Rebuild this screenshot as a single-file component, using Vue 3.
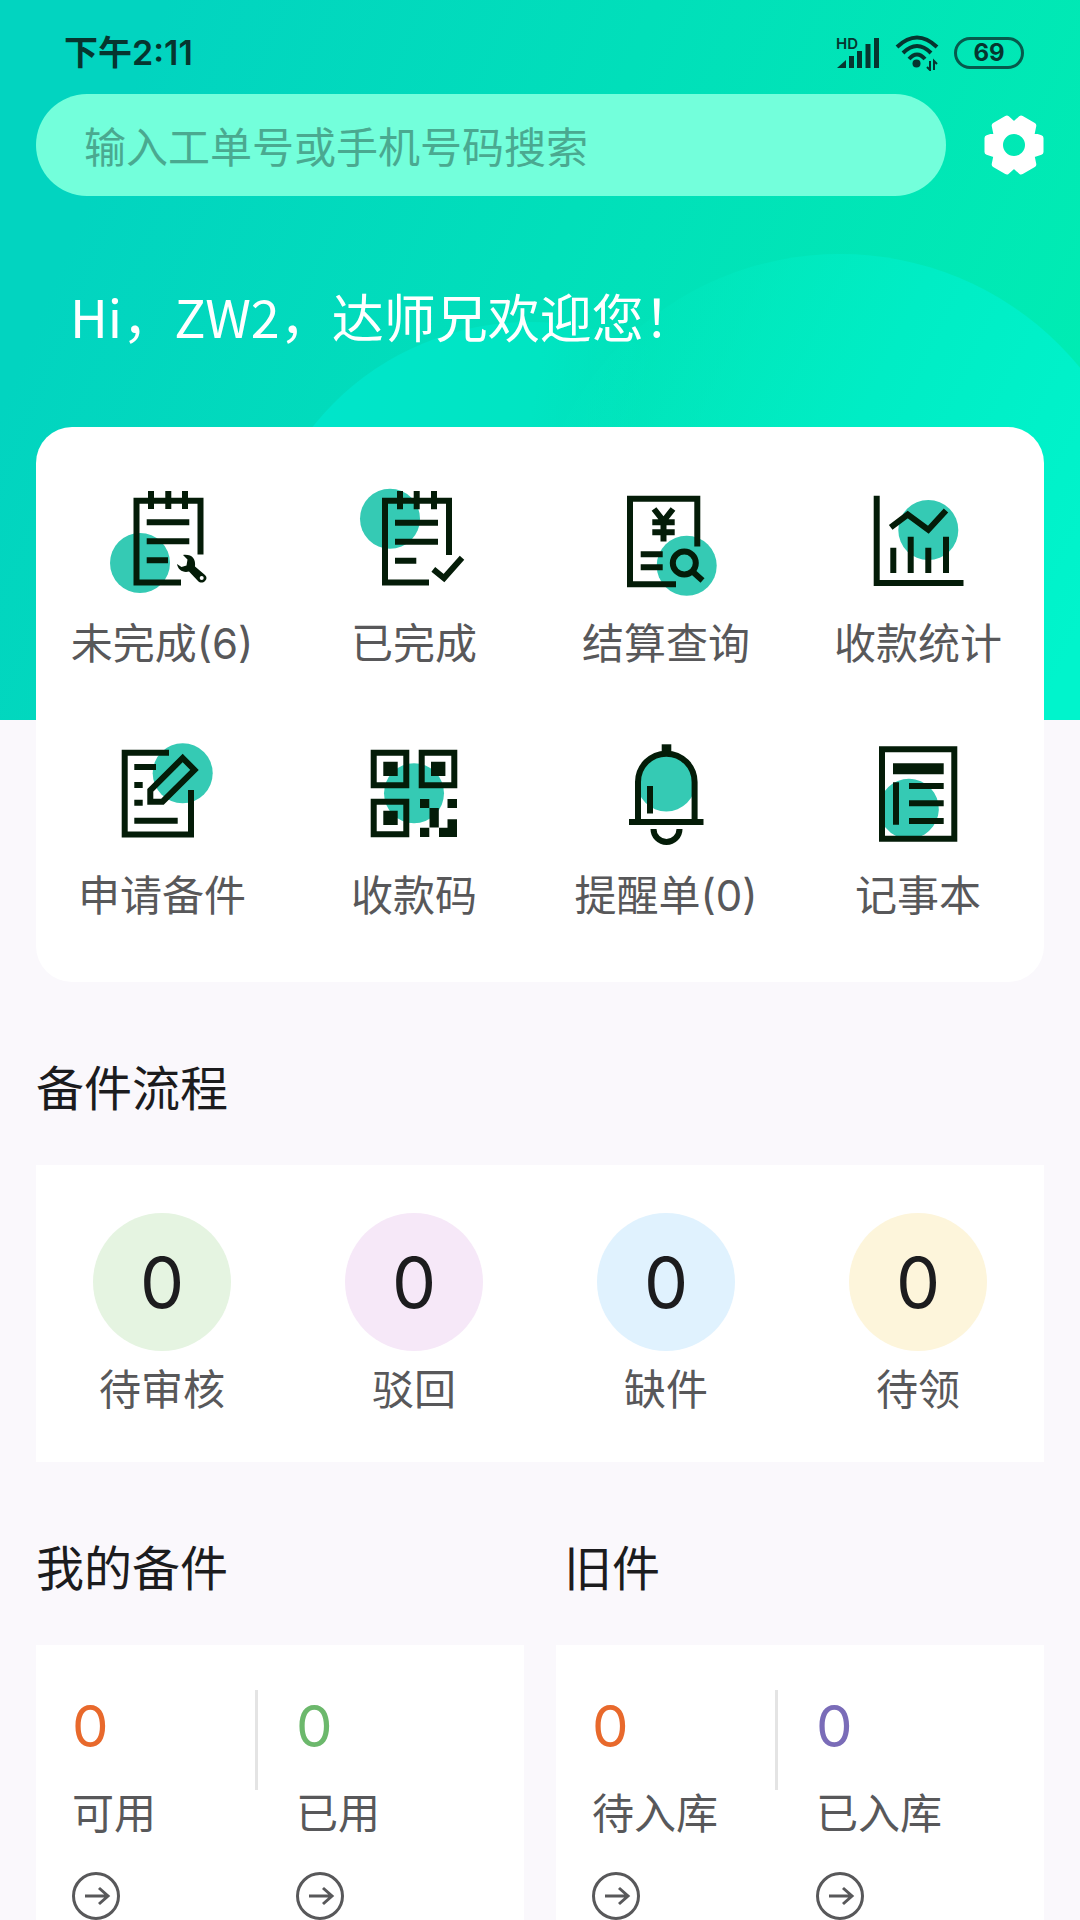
<template>
  <div class="page">
    <!-- 顶部装饰圆 -->
    <div class="decor">
      <span class="bubble bubble-left"></span>
      <span class="bubble bubble-right"></span>
    </div>

    <!-- 状态栏 -->
    <header class="status-bar">
      <span class="status-time">下午2:11</span>
      <div class="status-icons">
        <svg class="signal" viewBox="0 0 44 34" aria-hidden="true">
          <text x="0" y="13" class="hd">HD</text>
          <path d="M1 32 L10 24 V32 Z" />
          <path d="M15.5 32 V20 M23.5 32 V15 M32 32 V8 M40.5 32 V2" class="bars" />
        </svg>
        <svg class="wifi" viewBox="0 0 44 36" aria-hidden="true">
          <path d="M2 12 Q22 -7 42 12" />
          <path d="M8 18 Q22 4 36 18" />
          <path d="M14 24 Q22 15 30 24" />
          <circle cx="21.5" cy="28.5" r="4" />
          <path d="M35 26 V35 L32 32 M39 35 V26 L42 29" class="arrows" />
        </svg>
        <span class="battery">69</span>
      </div>
    </header>

    <!-- 搜索 -->
    <form class="search-row" @submit.prevent>
      <input
        v-model="keyword"
        class="search-input"
        type="text"
        aria-label="输入工单号或手机号码搜索"
        placeholder="输入工单号或手机号码搜索"
      />
      <button type="button" class="setting-btn" aria-label="设置">
        <svg viewBox="-30 -30 60 60" aria-hidden="true">
          <path
            fill-rule="evenodd"
            d="M26.5 -7 V7 L17.4 10 L19.3 19.3 L7.2 26.5 L0 20 L-7.2 26.5 L-19.3 19.3 L-17.4 10 L-26.5 7 V-7 L-17.4 -10 L-19.3 -19.3 L-7.2 -26.5 L0 -20 L7.2 -26.5 L19.3 -19.3 L17.4 -10 Z M14 0 A14 14 0 1 0 -14 0 A14 14 0 1 0 14 0 Z"
          />
        </svg>
      </button>
    </form>

    <h1 class="greeting">Hi，ZW2，达师兄欢迎您！</h1>

    <!-- 功能菜单 -->
    <nav class="menu-card">
      <a v-for="item in menus" :key="item.icon" href="#" class="menu-item" @click.prevent>
        <svg v-if="item.icon === 'todo'" class="icon" viewBox="0 0 120 120">
          <circle class="dot" cx="38" cy="83" r="30" />
          <path d="M79 102.5 H34.5 V20.7 H98.5 V74.5" />
          <path d="M49 11 V29 M66.3 11 V29 M83 11 V29" />
          <path d="M44.7 42.3 H87.3 M44.7 61.3 H87.3 M44.7 80.3 H66" />
          <path
            class="solid"
            d="M75 84 C76 90 81 93 87 91.5 L96 101 C98 103 101 103 103 101 C105 99 105 97 103 95 L93 86.5 C94 79 90 74 81 75 L85.5 79.5 L84.5 85.5 L79.5 87 Z"
          />
          <circle class="hole" cx="99.7" cy="98" r="2" />
        </svg>
        <svg v-else-if="item.icon === 'done'" class="icon" viewBox="0 0 120 120">
          <circle class="dot" cx="36" cy="38.7" r="30" />
          <path d="M75 102.5 H31 V20.7 H95 V75" />
          <path d="M46 11 V29.3 M62.7 11 V29.3 M80 11 V29.3" />
          <path d="M41 42.7 H84 M41 61.7 H84 M41 80.7 H62.3" />
          <path d="M79.3 89.3 L90 98 L108 77.7" />
        </svg>
        <svg v-else-if="item.icon === 'settle'" class="icon" viewBox="0 0 120 120">
          <circle class="dot" cx="80.7" cy="85.7" r="30" />
          <path d="M70 104.3 H24 V18.7 H91.3 V66.5" />
          <path d="M48 29 L57.5 41 L67 29 M57.5 40 V61.5 M46.3 42.3 H68.7 M46.3 52.3 H68.7" />
          <path d="M34.7 74.3 H56.7 M34.7 87.3 H56.7" />
          <circle cx="78.3" cy="83" r="11.5" />
          <path d="M86.5 91.5 L96.5 100.5" />
        </svg>
        <svg v-else-if="item.icon === 'chart'" class="icon" viewBox="0 0 120 120">
          <circle class="dot" cx="70.3" cy="50" r="30" />
          <path d="M18.7 15.7 V103 H105.5" />
          <path d="M32.7 47.3 L49.7 34.5 L70.3 49.7 L88 30.5" />
          <path d="M35.3 67.7 V93 M52.7 56.7 V93 M70.3 67.7 V93 M88 56.7 V93" />
        </svg>
        <svg v-else-if="item.icon === 'apply'" class="icon" viewBox="0 0 120 120">
          <circle class="dot" cx="80.7" cy="41.3" r="30" />
          <path d="M67 20.7 H22.7 V102.5 H89 V58" />
          <path d="M32.3 35 H54 M32.3 53 H40.7 M32.3 70.7 H40.7 M32.3 88.7 H75.7" />
          <path d="M80.7 26 L92.5 38 L60.5 69.7 H48.3 V58.3 Z" />
        </svg>
        <svg v-else-if="item.icon === 'qrcode'" class="icon" viewBox="0 0 120 120">
          <circle class="dot" cx="60" cy="61.3" r="30" />
          <path d="M19.7 20.7 H52.3 V53.3 H19.7 Z M67.7 20.7 H100.3 V53.3 H67.7 Z M19.7 69.7 H52.3 V102.3 H19.7 Z" />
          <path
            class="solid"
            d="M29.3 29.7 h14.4 v14.4 h-14.4 Z M77 29.7 h14.4 v14.4 h-14.4 Z M29.3 78.7 h14.4 v14.4 h-14.4 Z M66 67 h9.3 v9 h-9.3 Z M93.5 67 h9.5 v9 h-9.5 Z M75.5 76 h9.3 v19.5 h-9.3 Z M66 95.7 h9.3 v9.3 h-9.3 Z M93.5 87.3 h9.5 v17.7 h-18 v-9.3 h8.5 Z"
          />
        </svg>
        <svg v-else-if="item.icon === 'bell'" class="icon" viewBox="0 0 120 120">
          <circle class="dot" cx="60.3" cy="50" r="29.5" />
          <path d="M32 90 V50 A28.3 28.3 0 0 1 88.6 50 V90 M23 90 H97.5" />
          <path d="M44 54 V81.5" />
          <path d="M47.5 97 A13 13 0 0 0 73.5 97" />
          <path class="solid" d="M55.7 12.3 H65.3 V23 H55.7 Z" />
        </svg>
        <svg v-else class="icon" viewBox="0 0 120 120">
          <path class="dot" d="M26 60 A30 30 0 1 1 33 101 L26 94 Z" />
          <path d="M24 17.3 H96.3 V106.7 H24 Z" />
          <path d="M38 50.3 V92.7 M51 54 H85.7 M51 71.3 H85.7 M51 89 H85.7" />
          <path class="solid" d="M35 31.3 H85.7 V42.3 H35 Z" />
        </svg>
        <span class="label">{{ item.label }}</span>
      </a>
    </nav>

    <!-- 备件流程 -->
    <h2 class="section-title">备件流程</h2>
    <section class="flow-card">
      <a v-for="item in flows" :key="item.label" href="#" class="flow-item" @click.prevent>
        <span class="flow-num" :class="item.color">{{ item.count }}</span>
        <span class="label">{{ item.label }}</span>
      </a>
    </section>

    <!-- 我的备件 / 旧件 -->
    <div class="stock-row">
      <section v-for="group in stocks" :key="group.title" class="stock">
        <h2 class="section-title">{{ group.title }}</h2>
        <div class="stock-card">
          <a v-for="item in group.items" :key="item.label" href="#" class="stock-item" @click.prevent>
            <span class="stock-num" :class="item.color">{{ item.count }}</span>
            <span class="label">{{ item.label }}</span>
            <svg class="go" viewBox="0 0 48 48" aria-hidden="true">
              <circle cx="24" cy="24" r="22.5" />
              <path d="M13 24 H36 M27 16 L36 24 L27 32" />
            </svg>
          </a>
        </div>
      </section>
    </div>
  </div>
</template>

<script setup>
import { ref } from "vue";

// 搜索关键字
const keyword = ref("");

// 功能菜单
const menus = [
  { icon: "todo", label: "未完成(6)" },
  { icon: "done", label: "已完成" },
  { icon: "settle", label: "结算查询" },
  { icon: "chart", label: "收款统计" },
  { icon: "apply", label: "申请备件" },
  { icon: "qrcode", label: "收款码" },
  { icon: "bell", label: "提醒单(0)" },
  { icon: "note", label: "记事本" },
];

// 备件流程
const flows = [
  { label: "待审核", count: 0, color: "green" },
  { label: "驳回", count: 0, color: "pink" },
  { label: "缺件", count: 0, color: "blue" },
  { label: "待领", count: 0, color: "yellow" },
];

// 库存统计
const stocks = [
  {
    title: "我的备件",
    items: [
      { label: "可用", count: 0, color: "orange-text" },
      { label: "已用", count: 0, color: "green-text" },
    ],
  },
  {
    title: "旧件",
    items: [
      { label: "待入库", count: 0, color: "orange-text" },
      { label: "已入库", count: 0, color: "purple-text" },
    ],
  },
];
</script>

<style>
body {
  background: #faf8fc;
}
</style>

<style scoped>
.page {
  position: relative;
  display: flex;
  flex-direction: column;
  box-sizing: border-box;
  min-height: 100vh;
  padding: 0 36px;
  overflow: hidden;
  color: #1c1c1e;
  font-family: Inter, "Noto Sans CJK SC", sans-serif;
  background: #faf8fc;
}

a {
  color: inherit;
  text-decoration: none;
}

/* 顶部渐变背景 */
.decor {
  position: absolute;
  top: 0;
  left: 0;
  width: 100%;
  height: 720px;
  overflow: hidden;
  background: linear-gradient(112deg, #02d4c0 12%, #01dfba 48%, #00eeb2 96%);
}

.bubble {
  position: absolute;
  border-radius: 50%;
}

.bubble-left {
  top: 322px;
  right: 272px;
  width: 556px;
  height: 556px;
  background: linear-gradient(100deg, #00e5cb 10%, #00e5c2 45%, #00e5c200 62%);
}

.bubble-right {
  top: 254px;
  right: -70px;
  width: 620px;
  height: 620px;
  background: linear-gradient(115deg, #00e5bf00 10%, #00edc5 45%, #00f4cc 80%);
}

/* 状态栏 */
.status-bar {
  position: relative;
  display: flex;
  align-items: center;
  justify-content: space-between;
  height: 34px;
  padding: 36px 20px 24px 28px;
  color: #06352f;
}

.status-time {
  font-size: 34px;
  font-weight: 600;
  line-height: 34px;
}

.status-icons {
  display: flex;
  align-items: center;
  gap: 15px;
}

.signal {
  width: 44px;
  height: 34px;
  overflow: visible;
  fill: #06352f;
}

.hd {
  font-size: 15px;
  font-weight: 600;
}

.bars {
  stroke: #06352f;
  stroke-width: 5;
}

.wifi {
  width: 44px;
  height: 36px;
  fill: none;
  stroke: #06352f;
  stroke-width: 4;
}

.wifi circle {
  fill: #06352f;
  stroke: none;
}

.wifi .arrows {
  stroke-width: 2;
}

.battery {
  box-sizing: border-box;
  width: 70px;
  height: 32px;
  border: 3px solid #065a4c;
  border-radius: 16px;
  font-size: 24px;
  font-weight: 700;
  line-height: 26px;
  text-align: center;
}

/* 搜索 */
.search-row {
  position: relative;
  display: flex;
  align-items: center;
  gap: 38px;
}

.search-input {
  flex: 1;
  min-width: 0;
  box-sizing: border-box;
  height: 102px;
  padding: 4px 48px 0;
  border: none;
  border-radius: 51px;
  outline: none;
  color: #24705d;
  font-family: inherit;
  font-size: 42px;
  background: #73ffdb;
}

.search-input::placeholder {
  color: #4aa990;
  opacity: 1;
}

.setting-btn {
  width: 60px;
  height: 60px;
  padding: 0;
  border: none;
  background: transparent;
  cursor: pointer;
}

.setting-btn svg {
  display: block;
  fill: #fff;
  stroke: #fff;
  stroke-width: 6;
  stroke-linejoin: round;
}

.greeting {
  position: relative;
  margin: 82px 0 73px;
  padding-left: 34px;
  color: #fff;
  font-family: "Noto Sans CJK SC", sans-serif;
  font-size: 52px;
  font-weight: 400;
  line-height: 76px;
}

/* 功能菜单 */
.menu-card {
  position: relative;
  display: grid;
  grid-template-columns: repeat(4, 1fr);
  row-gap: 60px;
  padding: 53px 0 58px;
  border-radius: 36px;
  background: #fff;
}

.menu-item,
.flow-item {
  display: flex;
  flex-direction: column;
  align-items: center;
}

.menu-item {
  gap: 16px;
}

.icon {
  width: 120px;
  height: 120px;
  fill: none;
  stroke: #041c08;
  stroke-width: 6;
}

.icon .dot {
  fill: #35cab4;
  stroke: none;
}

.icon .solid {
  fill: #041c08;
  stroke: none;
}

.icon .hole {
  fill: #fff;
  stroke: none;
}

.label {
  color: #58585a;
  font-size: 42px;
  line-height: 56px;
  white-space: nowrap;
}

.section-title {
  margin: 0;
  padding: 71px 0 40px;
  font-size: 48px;
  font-weight: 400;
  line-height: 72px;
}

/* 备件流程 */
.flow-card {
  display: grid;
  grid-template-columns: repeat(4, 1fr);
  padding: 48px 0 44px;
  background: #fff;
}

.flow-item {
  gap: 11px;
}

.flow-num {
  width: 138px;
  height: 138px;
  border-radius: 50%;
  font-size: 70px;
  line-height: 140px;
  text-align: center;
}

.green {
  background: #e5f4e1;
}

.pink {
  background: #f6e8f8;
}

.blue {
  background: #e0f2fe;
}

.yellow {
  background: #fdf5db;
}

/* 库存统计 */
.stock-row {
  display: flex;
  flex: 1;
  gap: 32px;
}

.stock {
  display: flex;
  flex: 1;
  flex-direction: column;
}

.stock + .stock .section-title {
  padding-left: 8px;
}

.stock-card {
  display: grid;
  flex: 1;
  grid-template-columns: 224px 1fr;
  padding-top: 45px;
  background: #fff;
}

.stock-item {
  position: relative;
  display: flex;
  flex-direction: column;
  padding-left: 36px;
}

/* 分隔线 */
.stock-item:first-child::after {
  content: "";
  position: absolute;
  top: 0;
  right: 2px;
  width: 3px;
  height: 100px;
  background: #e4e4e4;
}

.stock-num {
  font-size: 58px;
  line-height: 72px;
}

.stock-item .label {
  margin: 24px 0 30px;
}

.orange-text {
  color: #e8692c;
}

.green-text {
  color: #6cb86c;
}

.purple-text {
  color: #7a6cb8;
}

.go {
  width: 48px;
  height: 48px;
  fill: none;
  stroke: #58585a;
  stroke-width: 3;
}
</style>
